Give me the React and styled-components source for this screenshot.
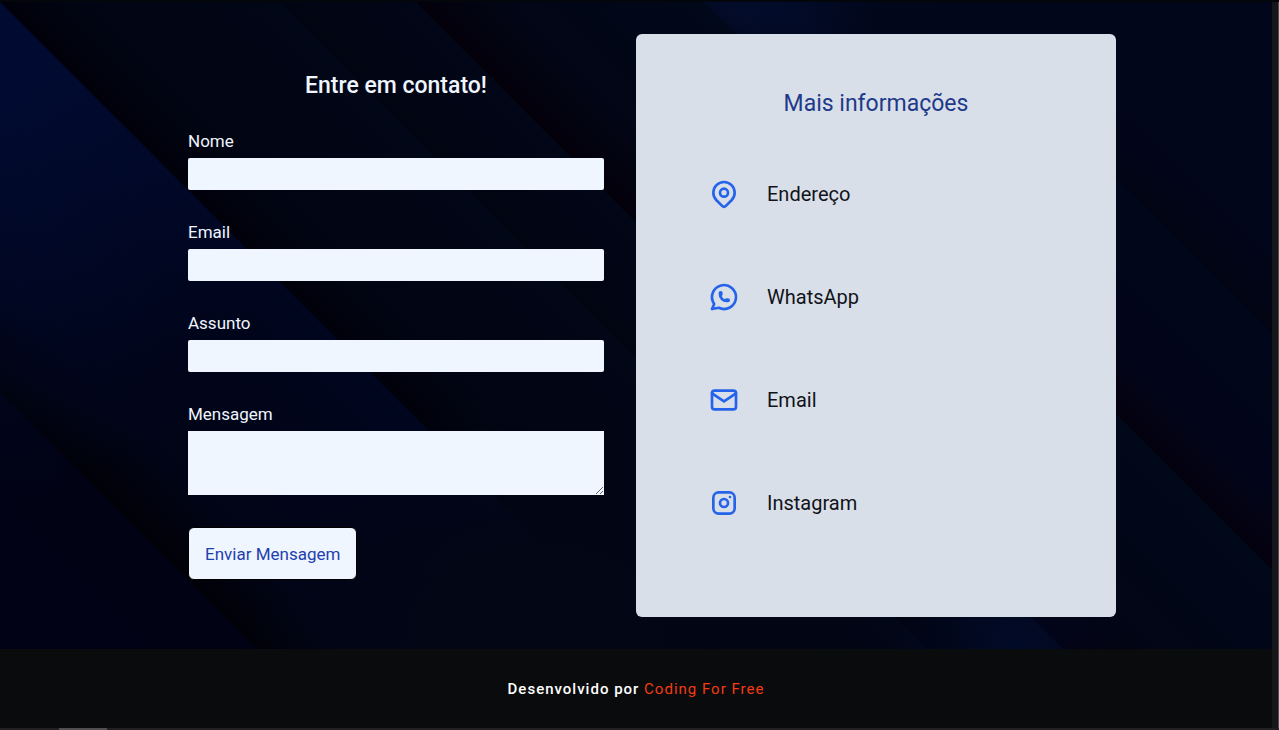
import React from 'react';
import styled, { createGlobalStyle } from 'styled-components';

const GlobalStyle = createGlobalStyle`
  * { box-sizing: border-box; }
  body {
    margin: 0;
    background: #0a0b0d;
    font-family: Roboto, 'Liberation Sans', sans-serif;
    font-size: 17px;
    line-height: 24px;
  }
  h2, ul { margin: 0; padding: 0; }
`;

const Page = styled.div`
  display: flex;
  flex-direction: column;
  min-height: 100vh;
  border-top: 2px solid #03060a;
`;

const Body = styled.div`
  display: flex;
  flex: 1;
`;

const Content = styled.div`
  display: flex;
  flex-direction: column;
  flex: 1;
  min-width: 0;
`;

const VerticalTrack = styled.div`
  width: 7px;
  background: #151619;
  border-right: 1px solid #4a4d4e;
`;

const HorizontalTrack = styled.div`
  height: 2px;
  padding-left: 59px;
  background: #202022;
`;

const Thumb = styled.div`
  width: 48px;
  height: 2px;
  background: #505052;
`;

const Contact = styled.section`
  padding: 32px;
  background:
    radial-gradient(ellipse 300px 260px at 540px 100%, #020615 40%, transparent),
    radial-gradient(ellipse 120px 120px at 1010px 100%, rgba(0, 20, 80, 0.3), transparent),
    radial-gradient(ellipse 300px 200px at 1100px 0, #02061a 50%, transparent),
    linear-gradient(
      45deg,
      transparent 457px,
      #01010b 458px, #010513 520px, #020717 655px,
      #010411 656px, #020718 751px,
      #03000b 752px, #020616 820px, #01081a 955px,
      transparent 956px
    ),
    radial-gradient(ellipse 300px 420px at 0 80px, rgba(0, 16, 72, 0.5), transparent),
    radial-gradient(ellipse 170px 130px at 740px 0, rgba(0, 28, 80, 0.4), transparent),
    linear-gradient(
      45deg,
      #010216 0, #010213 181px,
      #010108 182px, #010416 250px, #01051a 380px, #010620 457px,
      #010620 955px,
      #04010f 956px, #020519 1010px, #01071a 1122px,
      #020413 1123px, #02061a 1180px
    );
`;

const Columns = styled.div`
  display: grid;
  grid-template-columns: 1fr 1fr;
  width: 100%;
  max-width: 960px;
  margin: 0 auto;
`;

const Form = styled.form`
  display: flex;
  flex-direction: column;
  gap: 27px;
  padding: 36px 32px 37px;
`;

const Fields = styled.div`
  display: flex;
  flex-direction: column;
  gap: 30px;
`;

const Title = styled.h2`
  font-size: 23px;
  line-height: 32px;
  font-weight: ${(p) => (p.$strong ? 500 : 400)};
  color: ${(p) => (p.$strong ? '#eff6ff' : '#1e3a8a')};
  text-align: center;
`;

const Field = styled.div`
  display: flex;
  flex-direction: column;
  gap: 5px;
`;

const Label = styled.label`
  color: #eff6ff;
`;

const Input = styled.input`
  height: 32px;
  padding: 4px 8px;
  border: 0;
  border-radius: 2px;
  background: #eff6ff;
  font: inherit;
`;

const TextArea = styled.textarea`
  height: 64px;
  padding: 4px 8px;
  border: 0;
  background: #eff6ff;
  font: inherit;
  resize: vertical;
`;

const Submit = styled.button`
  align-self: flex-start;
  height: 53px;
  margin-top: 2px;
  padding: 0 16px;
  border: 1px solid #000;
  border-radius: 6px;
  background: #eff6ff;
  color: #1e40af;
  font: inherit;
`;

const Card = styled.aside`
  padding: 54px 72px;
  border-radius: 6px;
  background: #d9dfe9;
`;

const InfoList = styled.ul`
  display: flex;
  flex-direction: column;
  gap: 71px;
  margin-top: 58px;
  list-style: none;
`;

const InfoItem = styled.li`
  display: flex;
  align-items: center;
  gap: 27px;
  height: 32px;
  color: #111318;
  font-size: 20px;
  line-height: 28px;
`;

const Icon = styled.svg`
  width: 32px;
  height: 32px;
  fill: none;
  stroke: #2563eb;
  stroke-width: 2;
  stroke-linecap: round;
  stroke-linejoin: round;
`;

const Footer = styled.footer`
  flex: 1;
  padding: 28px 16px 27px;
  background: #0a0b0d;
  color: #fff;
  font-size: 15px;
  font-weight: 500;
  letter-spacing: 1px;
  text-align: center;
`;

const FooterLink = styled.a`
  color: #f43b12;
  font-weight: 400;
  text-decoration: none;
`;

const fields = [
  { id: 'nome', label: 'Nome', type: 'text' },
  { id: 'email', label: 'Email', type: 'email' },
  { id: 'assunto', label: 'Assunto', type: 'text' },
];

const infos = [
  {
    label: 'Endereço',
    paths: [
      'M9 11a3 3 0 1 0 6 0a3 3 0 0 0 -6 0',
      'M17.657 16.657l-4.243 4.243a2 2 0 0 1 -2.827 0l-4.244 -4.243a8 8 0 1 1 11.314 0z',
    ],
  },
  {
    label: 'WhatsApp',
    paths: [
      'M3 21l1.65 -3.8a9 9 0 1 1 3.4 2.9l-5.05 .9',
      'M9 10a.5 .5 0 0 0 1 0v-1a.5 .5 0 0 0 -1 0v1a5 5 0 0 0 5 5h1a.5 .5 0 0 0 0 -1h-1a.5 .5 0 0 0 0 1',
    ],
  },
  {
    label: 'Email',
    paths: [
      'M5 5h14a2 2 0 0 1 2 2v10a2 2 0 0 1 -2 2h-14a2 2 0 0 1 -2 -2v-10a2 2 0 0 1 2 -2z',
      'M3 7l9 6l9 -6',
    ],
  },
  {
    label: 'Instagram',
    paths: [
      'M8 4h8a4 4 0 0 1 4 4v8a4 4 0 0 1 -4 4h-8a4 4 0 0 1 -4 -4v-8a4 4 0 0 1 4 -4z',
      'M9 12a3 3 0 1 0 6 0a3 3 0 0 0 -6 0',
      'M16.5 7.5v.01',
    ],
  },
];

export default function App() {
  return (
    <Page>
      <GlobalStyle />
      <Body>
        <Content>
          <Contact>
            <Columns>
              <Form onSubmit={(e) => e.preventDefault()}>
                <Title $strong>Entre em contato!</Title>
                <Fields>
                  {fields.map((f) => (
                    <Field key={f.id}>
                      <Label htmlFor={f.id}>{f.label}</Label>
                      <Input id={f.id} name={f.id} type={f.type} />
                    </Field>
                  ))}
                  <Field>
                    <Label htmlFor="mensagem">Mensagem</Label>
                    <TextArea id="mensagem" name="mensagem" />
                  </Field>
                  <Submit type="submit">Enviar Mensagem</Submit>
                </Fields>
              </Form>
              <Card>
                <Title>Mais informações</Title>
                <InfoList>
                  {infos.map((info) => (
                    <InfoItem key={info.label}>
                      <Icon viewBox="0 0 24 24" aria-hidden="true">
                        {info.paths.map((d) => (
                          <path key={d} d={d} />
                        ))}
                      </Icon>
                      <span>{info.label}</span>
                    </InfoItem>
                  ))}
                </InfoList>
              </Card>
            </Columns>
          </Contact>
          <Footer>
            Desenvolvido por <FooterLink href="#">Coding For Free</FooterLink>
          </Footer>
        </Content>
        <VerticalTrack />
      </Body>
      <HorizontalTrack>
        <Thumb />
      </HorizontalTrack>
    </Page>
  );
}
